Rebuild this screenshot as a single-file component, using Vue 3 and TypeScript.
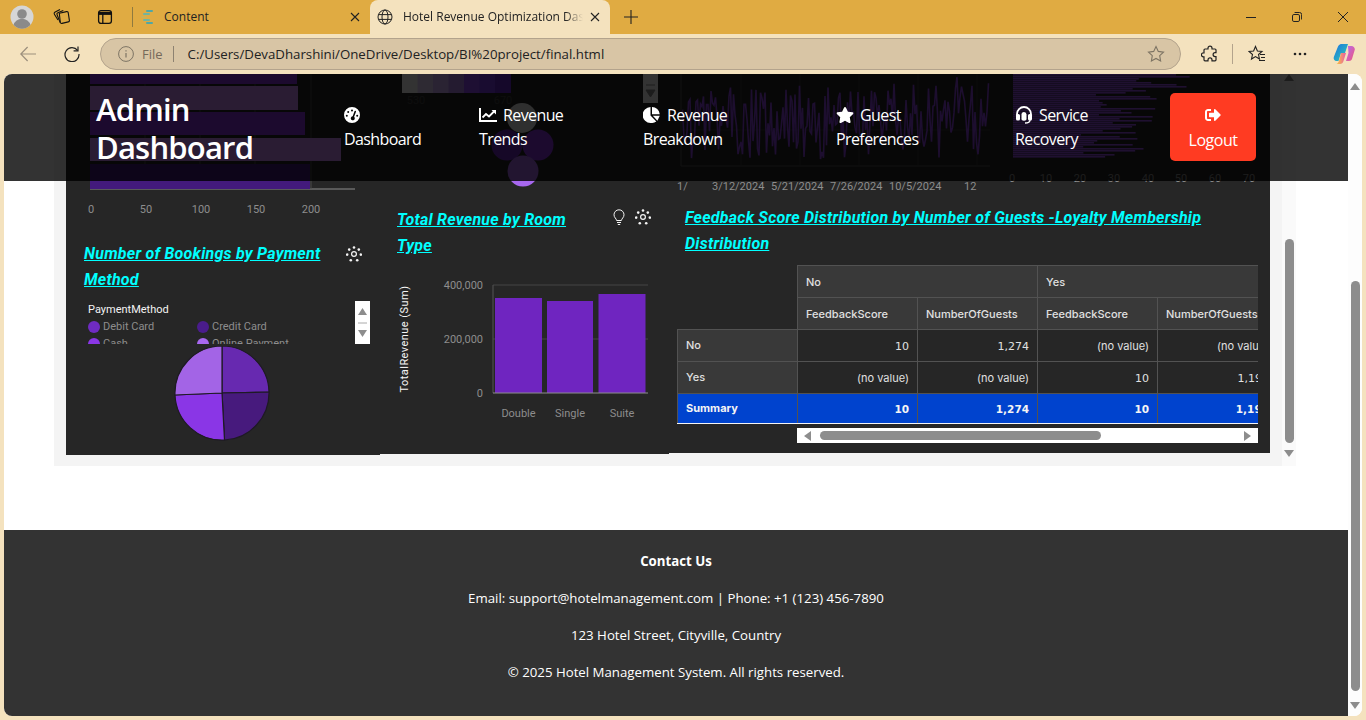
<script setup lang="ts">
const seed = (i: number) => {
  const x = Math.sin(i * 12.9898 + 4.1) * 43758.5453
  return x - Math.floor(x)
}
const linePts: string = Array.from({ length: 206 }, (_, i) => {
  const x = 681 + i * 1.5
  const y = 76 + seed(i) * 72 + seed(i + 300) * 16
  return `${x},${y.toFixed(1)}`
}).join(' ')
const hbars = Array.from({ length: 42 }, (_, i) => ({
  y: 74 + i * 2,
  w: 82 + seed(i + 40) * 70 + (i < 8 ? 30 : 0) - i * 0.5
}))
const rows = [
  { name: 'No', cells: ['10', '1,274', '(no value)', '(no value)'], cls: '' },
  { name: 'Yes', cells: ['(no value)', '(no value)', '10', '1,194'], cls: '' },
  { name: 'Summary', cells: ['10', '1,274', '10', '1,194'], cls: 'summary' }
]
const isNum = (c: string) => !c.startsWith('(')
const lineTicks = [
  { x: 677, t: '1/' }, { x: 712, t: '3/12/2024' }, { x: 771, t: '5/21/2024' },
  { x: 830, t: '7/26/2024' }, { x: 889, t: '10/5/2024' }, { x: 964, t: '12' }
]
const nav = [
  { id: 'dash', a: '', b: 'Dashboard' },
  { id: 'line', a: 'Revenue', b: 'Trends' },
  { id: 'pie', a: 'Revenue', b: 'Breakdown' },
  { id: 'star', a: 'Guest', b: 'Preferences' },
  { id: 'head', a: 'Service', b: 'Recovery' }
]
const heat = ['#ffffff', '#e6d2ff', '#d2afff', '#b487f0', '#964bff', '#7d3cf0', '#6928d2']
const dots = [[0, -6.5], [4.8, -4.4], [6.8, 0.6], [3.2, 6.2], [-3.2, 6.2], [-6.8, 0.6], [-4.8, -4.4]]
</script>

<template>
  <div class="window">
    <div class="tabstrip">
      <svg class="avatar" width="24" height="24" viewBox="0 0 24 24">
        <circle cx="12" cy="12" r="11.5" fill="#d6d6d6" />
        <circle cx="12" cy="9" r="4.8" fill="#8a8a8a" />
        <path d="M3.6 20a8.6 8 0 0 1 16.8 0a11.5 11.5 0 0 1-16.8 0z" fill="#8a8a8a" />
      </svg>
      <svg class="tool-a" width="18" height="18" viewBox="0 0 18 18" fill="none" stroke="#111" stroke-width="1.1">
        <path d="M7.300 5.200 14.500 3.600a1.400 1.400 0 0 1 1.700 1.100l1.200 7.600a1.400 1.400 0 0 1-1.100 1.600l-6.300 1.500a1.400 1.400 0 0 1-1.700-1z" />
        <path d="M8.200 14.600 5 6.500a1.400 1.400 0 0 1 .8-1.800l5.500-2.300" />
        <path d="M6 12 2.400 6.200a1.400 1.400 0 0 1 .4-1.900L8 1.600" />
      </svg>
      <svg class="tool-b" width="16" height="16" viewBox="0 0 16 16" fill="none" stroke="#111" stroke-width="1.3">
        <rect x="1.600" y="1.600" width="12.800" height="12.800" rx="2.400" />
        <path d="M1.600 4.400h12.800" stroke-width="3" />
        <path d="M5.800 5v9.400" />
      </svg>
      <span class="tab-sep"></span>
      <div class="tab">
        <svg width="16" height="16" viewBox="0 0 16 16" fill="none" stroke-width="2" stroke-linecap="round">
          <path d="M8 2h5" stroke="#4fa7a5" /><path d="M5 5h5" stroke="#6fb4a0" />
          <path d="M3 8h4" stroke="#c9b35a" /><path d="M5 11h5" stroke="#6fb4a0" /><path d="M8 14h5" stroke="#4fa7a5" />
        </svg>
        <span class="tab-title">Content</span>
        <svg class="tab-x" width="10" height="10" viewBox="0 0 10 10" stroke="#222" stroke-width="1.1"><path d="M1 1l8 8M9 1l-8 8" /></svg>
      </div>
      <div class="tab active">
        <svg width="16" height="16" viewBox="0 0 16 16" fill="none" stroke="#222" stroke-width="1">
          <circle cx="8" cy="8" r="7" /><ellipse cx="8" cy="8" rx="3" ry="7" /><path d="M1.400 5.600h13.200M1.400 10.400h13.200" />
        </svg>
        <span class="tab-title fade">Hotel Revenue Optimization Dashboard</span>
        <svg class="tab-x" width="10" height="10" viewBox="0 0 10 10" stroke="#222" stroke-width="1.1"><path d="M1 1l8 8M9 1l-8 8" /></svg>
      </div>
      <svg class="plus" width="14" height="14" viewBox="0 0 14 14" stroke="#222" stroke-width="1.1"><path d="M7 0v14M0 7h14" /></svg>
      <div class="winctl">
        <svg width="10" height="10" viewBox="0 0 10 10" stroke="#222" stroke-width="1"><path d="M0 5.500h10" /></svg>
        <svg width="10" height="10" viewBox="0 0 10 10" fill="none" stroke="#222" stroke-width="1"><rect x=".5" y="2.500" width="7" height="7" rx="1.400" /><path d="M2.600.5h5a2 2 0 0 1 2 2v5" /></svg>
        <svg width="10" height="10" viewBox="0 0 10 10" stroke="#222" stroke-width="1"><path d="M0 0l10 10M10 0 0 10" /></svg>
      </div>
    </div>

    <div class="toolbar">
      <svg class="back" width="16" height="16" viewBox="0 0 16 16" fill="none" stroke="#9b8f7c" stroke-width="1.200"><path d="M16 8H.8M7.600 1 .8 8l6.800 7" /></svg>
      <svg class="reload" width="16" height="16" viewBox="0 0 16 16" fill="none" stroke="#222" stroke-width="1.200"><path d="M13.600 4.400A7 7 0 1 0 15 8" /><path d="M14 .4v4.400H9.600" /></svg>
      <div class="address">
        <svg width="16" height="16" viewBox="0 0 16 16" fill="none" stroke="#7d7464" stroke-width="1"><circle cx="8" cy="8" r="7.400" /><path d="M8 7v4.600M8 4.200v1.400" stroke-width="1.200" /></svg>
        <span class="file">File</span>
        <span class="addr-sep"></span>
        <span class="url">C:/Users/DevaDharshini/OneDrive/Desktop/BI%20project/final.html</span>
        <svg class="addr-star" width="18" height="18" viewBox="0 0 18 18" fill="none" stroke="#7d7464" stroke-width="1.100"><path d="M9 1.600l2.300 4.800 5.200.7-3.800 3.600.9 5.200L9 13.400l-4.600 2.500.9-5.200L1.500 7.100l5.200-.7z" /></svg>
      </div>
      <svg class="ext" width="18" height="18" viewBox="0 0 18 18" fill="none" stroke="#222" stroke-width="1.200"><path d="M7 3.200a2 2 0 0 1 4 0V4h3a1 1 0 0 1 1 1v2.600h-.9a2 2 0 0 0 0 4h.9v3.200a1 1 0 0 1-1 1h-3v-.9a2 2 0 0 0-4 0v.9H4a1 1 0 0 1-1-1v-3h-.6a2 2 0 0 1 0-4H3V5a1 1 0 0 1 1-1h3z" /></svg>
      <span class="bar-sep"></span>
      <svg class="fav" width="18" height="18" viewBox="0 0 18 18" fill="none" stroke="#222" stroke-width="1.100"><path d="M7.500 1.500 9.400 6 14 6.500l-3.500 3 1 4.500-4-2.400-4 2.400 1-4.500L1 6.500 5.600 6z" /><path d="M12 9.500h5M13 12.500h4M11 15.500h6" /></svg>
      <svg class="more" width="14" height="4" viewBox="0 0 14 4" fill="#222"><circle cx="2" cy="2" r="1.300" /><circle cx="7" cy="2" r="1.300" /><circle cx="12" cy="2" r="1.300" /></svg>
      <svg class="copilot" width="22" height="22" viewBox="0 0 22 22">
        <defs>
          <linearGradient id="cpA" x1="0" y1="0" x2="1" y2="1"><stop offset="0" stop-color="#1b6fe2" /><stop offset="1" stop-color="#2fd2b0" /></linearGradient>
          <linearGradient id="cpB" x1="0" y1="0" x2="1" y2="1"><stop offset="0" stop-color="#b56bf0" /><stop offset="1" stop-color="#f0557a" /></linearGradient>
          <linearGradient id="cpC" x1="0" y1="0" x2="1" y2="0"><stop offset="0" stop-color="#f6c83c" /><stop offset="1" stop-color="#ea5aa8" /></linearGradient>
        </defs>
        <path d="M5 3.500C6 1.500 7.500 1 9 1h6l-3 9H8l-2.500 8H3.500C1.500 18 .2 16 .8 14z" fill="url(#cpA)" />
        <path d="M15 3h3.500c2 0 3.800 2 3.200 4l-2.700 9c-.4 1.300-1.500 2-3 2h-3l2.500-8z" fill="url(#cpB)" />
        <path d="M8 10h5l-2.500 8c-.5 1.700-1.700 3-3.500 3H3.500c2.500-1 3-5 4.500-11z" fill="url(#cpC)" />
      </svg>
    </div>

    <div class="page">
      <div class="doc">
        <header class="topbar">
          <h1 class="logo">Admin Dashboard</h1>
          <a v-for="n in nav" :key="n.id" class="navitem">
            <span class="navline">
              <svg v-if="n.id === 'dash'" class="ic" width="16" height="16" viewBox="0 0 16 16" fill="#fff">
                <path fill-rule="evenodd" d="M8 0a8 8 0 1 1 0 16A8 8 0 0 1 8 0zM8 2.400a1 1 0 1 0 0 2 1 1 0 0 0 0-2zM4.200 4a1 1 0 1 0 0 2 1 1 0 0 0 0-2zM2.800 7.800a1 1 0 1 0 0 2 1 1 0 0 0 0-2zM13.200 7.800a1 1 0 1 0 0 2 1 1 0 0 0 0-2zM11.500 3.700a.8.8 0 0 0-1 .5L8.700 9.300a2 2 0 1 0 1.400.5l1.900-5.100a.8.8 0 0 0-.5-1z" />
              </svg>
              <svg v-else-if="n.id === 'line'" class="ic" width="18" height="16" viewBox="0 0 18 16" fill="none" stroke="#fff">
                <path d="M1 1v13h17" stroke-width="2" />
                <path d="M3.500 10.500 7 7l3 2.500L15.500 4" stroke-width="1.800" />
                <path d="M12.500 3h4.500v4.500z" fill="#fff" stroke="none" />
              </svg>
              <svg v-else-if="n.id === 'pie'" class="ic" width="18" height="16" viewBox="0 0 18 16" fill="#fff">
                <path d="M7.500 0v8.600l5.800 5.800A7.900 7.900 0 0 1 7.800 16 7.900 7.900 0 0 1 7.500 0z" />
                <path d="M9 0a8 8 0 0 1 7.800 7.200H9z" /><path d="M9.800 8.800h7l-2.400 4.900z" />
              </svg>
              <svg v-else-if="n.id === 'star'" class="ic" width="18" height="16" viewBox="0 0 576 512" fill="#fff">
                <path d="M259.300 17.800L194 150.200 47.900 171.500c-26.200 3.800-36.700 36.100-17.700 54.600l105.700 103-25 145.500c-4.500 26.300 23.200 46 46.400 33.700L288 439.600l130.700 68.700c23.200 12.200 50.900-7.400 46.400-33.700l-25-145.500 105.700-103c19-18.500 8.500-50.800-17.700-54.600L382 150.200 316.700 17.800c-11.700-23.600-45.600-23.900-57.400 0z" />
              </svg>
              <svg v-else class="ic" width="18" height="18" viewBox="0 0 18 18" fill="none" stroke="#fff">
                <path d="M2 10V8a7 7 0 0 1 14 0v2" stroke-width="1.800" />
                <rect x="1" y="8" width="4" height="6.500" rx="1.600" fill="#fff" stroke="none" />
                <rect x="13" y="8" width="4" height="6.500" rx="1.600" fill="#fff" stroke="none" />
                <path d="M6.500 8.500v5a3 3 0 0 0 5 0v-5a2.500 2.500 0 0 0-5 0z" fill="#fff" stroke="none" />
                <path d="M15 14c0 2-2 3-5 3" stroke-width="1.400" />
              </svg>
              <span v-if="n.a">{{ n.a }}</span>
            </span>
            <span>{{ n.b }}</span>
          </a>
          <button class="logout" type="button">
            <svg width="16" height="16" viewBox="0 0 512 512" fill="#fff">
              <path d="M497 273L329 441c-15 15-41 4.500-41-17v-96H152c-13.300 0-24-10.700-24-24v-96c0-13.300 10.700-24 24-24h136V88c0-21.400 25.900-32 41-17l168 168c9.300 9.400 9.300 24.600 0 34zM192 436v-40c0-6.600-5.400-12-12-12H96c-17.700 0-32-14.300-32-32V160c0-17.700 14.300-32 32-32h84c6.600 0 12-5.400 12-12V76c0-6.600-5.400-12-12-12H96c-53 0-96 43-96 96v192c0 53 43 96 96 96h84c6.600 0 12-5.400 12-12z" />
            </svg>
            <span>Logout</span>
          </button>
        </header>

        <section class="content">
          <div class="panel">
            <div class="board">
              <div class="col col1">
                <svg class="top1" width="314" height="167" viewBox="66 74 314 167">
                  <path d="M90 189h265" stroke="#8d8d8d" />
                  <path d="M145 74v115M200 74v115M255 74v115M311 74v115" stroke="#4a4a4a" />
                  <rect x="90" y="74" width="207" height="10" fill="#8a36e6" />
                  <rect x="90" y="86" width="208" height="24" fill="#d08cff" />
                  <rect x="90" y="112" width="215" height="23" fill="#8a36e6" />
                  <rect x="90" y="138" width="251" height="23" fill="#d08cff" />
                  <rect x="90" y="164" width="220" height="25" fill="#431a7c" />
                  <g class="tick" text-anchor="middle">
                    <text x="91" y="213">0</text><text x="146" y="213">50</text><text x="201" y="213">100</text>
                    <text x="256" y="213">150</text><text x="311" y="213">200</text>
                  </g>
                </svg>
                <div class="title-row">
                  <h2 class="chart-title"><u>Number of Bookings by Payment Method</u></h2>
                  <svg class="gear" width="16" height="16" viewBox="-8 -8 16 16" fill="#f4f4f4">
                    <circle r="2.400" fill="none" stroke="#f4f4f4" stroke-width="1.200" />
                    <circle v-for="(d, i) in dots" :key="i" :cx="d[0]" :cy="d[1]" r="1.300" />
                  </svg>
                </div>
                <div class="legend-wrap">
                  <div class="legend">
                    <div class="legend-head">PaymentMethod</div>
                    <div class="legend-grid">
                      <span class="li"><i class="dot d1"></i>Debit Card</span>
                      <span class="li"><i class="dot d2"></i>Credit Card</span>
                      <span class="li"><i class="dot d3"></i>Cash</span>
                      <span class="li"><i class="dot d4"></i>Online Payment</span>
                    </div>
                  </div>
                  <div class="pager">
                    <svg width="15" height="43" viewBox="0 0 15 43" fill="#8d8d8d">
                      <path d="M7.500 7 12 14H3z" /><path d="M3 22h9" stroke="#aaa" /><path d="M3 29h9l-4.500 7z" />
                    </svg>
                  </div>
                </div>
                <svg class="pie" width="314" height="100" viewBox="66 346 314 100">
                  <g stroke="#1e1a24" stroke-width="1.200">
                    <path d="M222 393V346A47 47 0 0 1 269 392z" fill="#6729b0" />
                    <path d="M222 393L269 392A47 47 0 0 1 224.500 440z" fill="#471a7d" />
                    <path d="M222 393L224.500 440A47 47 0 0 1 175 395z" fill="#8a36e6" />
                    <path d="M222 393L175 395A47 47 0 0 1 222 346z" fill="#a364e6" />
                  </g>
                </svg>
              </div>

              <div class="col col2">
                <svg class="top2" width="289" height="133" viewBox="380 74 289 133">
                  <rect v-for="(c, i) in heat" :key="i" :x="402 + i * 15.500" y="74" width="16" height="19" :fill="c" />
                  <g class="tick faint" text-anchor="middle"><text x="416" y="104">530</text><text x="503" y="104">670</text></g>
                  <rect x="643" y="74" width="15" height="29" fill="#fff" />
                  <path d="M646 85h9M646 90h9l-4.500 7z" fill="#8d8d8d" stroke="#8d8d8d" />
                  <circle cx="522" cy="118" r="15" fill="#e8e8e8" />
                  <circle cx="538" cy="145" r="15.500" fill="#8a36e6" />
                  <circle cx="507" cy="145" r="15.500" fill="#6f2bc2" />
                  <circle cx="523" cy="171" r="15.500" fill="#a868f0" />
                </svg>
                <div class="title-row tight">
                  <h2 class="chart-title"><u>Total Revenue by Room Type</u></h2>
                  <div class="title-icons">
                    <svg width="14" height="16" viewBox="0 0 14 16" fill="none" stroke="#f4f4f4"><path d="M4.600 11.500C4.400 9.500 2 8.600 2 5.800a5 5 0 0 1 10 0c0 2.800-2.400 3.700-2.600 5.700z" /><path d="M5 13.500h4M5.800 15.500h2.400" /></svg>
                    <svg class="gear" width="16" height="16" viewBox="-8 -8 16 16" fill="#f4f4f4">
                      <circle r="2.400" fill="none" stroke="#f4f4f4" stroke-width="1.200" />
                      <circle v-for="(d, i) in dots" :key="i" :cx="d[0]" :cy="d[1]" r="1.300" />
                    </svg>
                  </div>
                </div>
                <svg class="bars" width="289" height="180" viewBox="380 259 289 180">
                  <path d="M493 285H648M493 339H648" stroke="#444" />
                  <path d="M493 285V393" stroke="#555" />
                  <rect x="495" y="298" width="47" height="95" fill="#6f25c0" />
                  <rect x="547" y="301" width="46" height="92" fill="#6f25c0" />
                  <rect x="598.500" y="294" width="47" height="99" fill="#6f25c0" />
                  <path d="M493 393H648" stroke="#8d8d8d" />
                  <g class="tick" text-anchor="end">
                    <text x="483" y="289">400,000</text><text x="483" y="343">200,000</text><text x="483" y="397">0</text>
                  </g>
                  <g class="tick" text-anchor="middle">
                    <text x="518.500" y="417">Double</text><text x="570" y="417">Single</text><text x="622" y="417">Suite</text>
                  </g>
                  <text class="axis-y" transform="translate(408 339) rotate(-90)" text-anchor="middle">TotalRevenue (Sum)</text>
                </svg>
              </div>

              <div class="col col3">
                <svg class="top3" width="601" height="131" viewBox="669 74 601 131">
                  <path d="M681 166H990M681 74V166" stroke="#555" />
                  <path d="M741 74V166M800 74V166M859 74V166M918 74V166M977 74V166M681 130H990" stroke="#3d3d3d" />
                  <polyline :points="linePts" fill="none" stroke="#8f45e8" stroke-width="1.600" />
                  <g class="tick">
                    <text v-for="t in lineTicks" :key="t.x" :x="t.x" y="190">{{ t.t }}</text>
                  </g>
                  <rect v-for="b in hbars" :key="b.y" x="1013" :y="b.y" :width="b.w" height="1.600" fill="#9a50f0" />
                  <g class="tick faint2" text-anchor="middle">
                    <text x="1012" y="182">0</text><text x="1046" y="182">10</text><text x="1080" y="182">20</text><text x="1114" y="182">30</text>
                    <text x="1148" y="182">40</text><text x="1181" y="182">50</text><text x="1215" y="182">60</text><text x="1249" y="182">70</text>
                  </g>
                </svg>
                <h2 class="chart-title wide"><u>Feedback Score Distribution by Number of Guests -Loyalty Membership Distribution</u></h2>
                <div class="tbl-clip">
                  <table class="pivot">
                    <colgroup><col class="c0" /><col class="c1" /><col class="c1" /><col class="c1" /><col class="c1" /></colgroup>
                    <thead>
                      <tr><th class="blank noline"></th><th class="hd" colspan="2">No</th><th class="hd" colspan="2">Yes</th></tr>
                      <tr>
                        <th class="blank"></th><th class="hd">FeedbackScore</th><th class="hd">NumberOfGuests</th>
                        <th class="hd">FeedbackScore</th><th class="hd">NumberOfGuests</th>
                      </tr>
                    </thead>
                    <tbody>
                      <tr v-for="r in rows" :key="r.name" :class="r.cls">
                        <th class="hd rowh">{{ r.name }}</th>
                        <td v-for="(c, i) in r.cells" :key="i" :class="{ num: isNum(c) }">{{ c }}</td>
                      </tr>
                    </tbody>
                  </table>
                </div>
                <div class="hscroll">
                  <svg width="8" height="10" viewBox="0 0 8 10" fill="#8d8d8d"><path d="M7 0v10L0 5z" /></svg>
                  <span class="hthumb"></span>
                  <svg class="hnext" width="8" height="10" viewBox="0 0 8 10" fill="#8d8d8d"><path d="M1 0v10l7-5z" /></svg>
                </div>
              </div>
            </div>
          </div>
          <div class="vscroll inner">
            <svg width="10" height="7" viewBox="0 0 10 7" fill="#8d8d8d"><path d="M5 0l5 7H0z" /></svg>
            <span class="vthumb inner-thumb"></span>
            <svg class="inner-down" width="10" height="7" viewBox="0 0 10 7" fill="#8d8d8d"><path d="M0 0h10L5 7z" /></svg>
          </div>
        </section>

        <footer class="foot">
          <p><strong>Contact Us</strong></p>
          <p>Email: support@hotelmanagement.com | Phone: +1 (123) 456-7890</p>
          <p>123 Hotel Street, Cityville, Country</p>
          <p>© 2025 Hotel Management System. All rights reserved.</p>
        </footer>
      </div>
      <div class="vscroll outer">
        <svg class="outer-up" width="10" height="7" viewBox="0 0 10 7" fill="#8d8d8d"><path d="M5 0l5 7H0z" /></svg>
        <span class="vthumb outer-thumb"></span>
        <svg class="outer-down" width="10" height="7" viewBox="0 0 10 7" fill="#8d8d8d"><path d="M0 0h10L5 7z" /></svg>
      </div>
    </div>
  </div>
</template>

<style scoped>
.window {
  width: 1366px;
  height: 720px;
  display: flex;
  flex-direction: column;
  background: #f4e2be;
  font-family: "Open Sans", "Noto Sans", sans-serif;
  overflow: hidden;
}
.tabstrip {
  height: 34px;
  background: #e0ab42;
  display: flex;
  align-items: center;
  flex: none;
}
.avatar { margin-left: 10px; }
.tool-a { margin-left: 18px; }
.tool-b { margin-left: 27px; }
.tab-sep { width: 1px; height: 20px; background: #8f7a3f; margin-left: 19px; }
.tab {
  display: flex;
  align-items: center;
  width: 237px;
  height: 34px;
  padding-left: 6px;
  box-sizing: border-box;
  font-size: 12px;
  color: #222;
  line-height: 32px;
}
.tab-title { margin-left: 9px; white-space: nowrap; overflow: hidden; padding-bottom: 1px; }
.tab-x { margin-left: auto; margin-right: 10px; }
.tab.active {
  width: 240px;
  background: #f4e2be;
  border-radius: 8px 8px 0 0;
  padding-left: 7px;
}
.tab-title.fade { width: 180px; margin-left: 10px; -webkit-mask-image: linear-gradient(90deg, #000 90%, transparent); mask-image: linear-gradient(90deg, #000 90%, transparent); }
.plus { margin-left: 14px; }
.winctl { margin-left: auto; display: flex; gap: 36px; margin-right: 18px; }

.toolbar {
  height: 40px;
  display: flex;
  align-items: center;
  flex: none;
}
.back { margin-left: 20px; }
.reload { margin-left: 28px; }
.address {
  margin-left: 20px;
  width: 1081px;
  height: 32px;
  box-sizing: border-box;
  border: 1px solid #b3a38c;
  border-radius: 16px;
  background: #d8c5a5;
  display: flex;
  align-items: center;
  padding-left: 17px;
}
.file { margin-left: 8px; font-size: 13px; color: #75695a; }
.addr-sep { width: 1px; height: 16px; background: #8d8271; margin-left: 10px; }
.url { margin-left: 14px; font-size: 13.25px; color: #222; white-space: nowrap; }
.addr-star { margin-left: auto; margin-right: 15px; }
.ext { margin-left: 20px; }
.bar-sep { width: 1px; height: 20px; background: #b3a38c; margin-left: 13px; }
.fav { margin-left: 15px; }
.more { margin-left: 27px; }
.copilot { margin-left: 26px; }

.page {
  flex: 1;
  margin: 0 4px 4px;
  display: flex;
  background: #fff;
  border-radius: 8px;
  overflow: hidden;
  min-height: 0;
}
.doc {
  position: relative;
  width: 1344px;
  display: flex;
  flex-direction: column;
  flex: none;
}
.topbar {
  position: absolute;
  left: 0;
  right: 0;
  top: 0;
  height: 107px;
  box-sizing: border-box;
  padding: 0 0 2px 92px;
  background: rgba(0, 0, 0, 0.8);
  color: #fff;
  display: grid;
  grid-template-columns: 248px 135px 164px 193px 179px 155px 86px;
  align-items: center;
  z-index: 5;
}
.logo {
  margin: 0 0 -2px;
  width: 190px;
  font-size: 31px;
  line-height: 38px;
  font-weight: 600;
  letter-spacing: -0.8px;
}
.navitem {
  display: flex;
  flex-direction: column;
  font-size: 16px;
  line-height: 24px;
  letter-spacing: -0.6px;
}
.navline { display: flex; align-items: center; gap: 6px; height: 24px; }
.logout {
  height: 68px;
  width: 86px;
  border: 0;
  border-radius: 5px;
  background: #ff3b22;
  color: #fff;
  font: inherit;
  font-size: 16px;
  letter-spacing: -0.5px;
  line-height: 24px;
  padding: 14px 0 0;
  display: flex;
  flex-direction: column;
  align-items: center;
  justify-content: flex-start;
  gap: 5px;
}

.content {
  height: 456px;
  flex: none;
  display: flex;
  align-items: flex-start;
  padding-left: 50px;
  background: #fff;
}
.panel {
  width: 1228px;
  height: 392px;
  background: #f4f4f4;
  padding: 0 12px;
  box-sizing: border-box;
}
.board { display: flex; align-items: flex-start; }
.col { background: #262626; flex: none; }
.col1 { width: 314px; height: 381px; }
.col2 { width: 289px; height: 380px; }
.col3 { width: 601px; height: 379px; }
.col svg { display: block; }
.tick { font: 11px Roboto, sans-serif; fill: #8d8d8d; }
.faint { fill: #444; }
.axis-y { font: 11px Roboto, sans-serif; fill: #f4f4f4; letter-spacing: .45px; }
.title-row {
  display: flex;
  justify-content: space-between;
  padding: 0 18px;
}
.title-row.tight { padding: 0 18px 0 17px; }
.chart-title {
  margin: 0;
  font: italic 700 16px/26px Roboto, sans-serif;
  letter-spacing: 0.24px;
  color: #00ffff;
  width: 250px;
}
.chart-title.wide { width: 560px; margin-left: 16px; }
.col2 .chart-title { width: 195px; }
.title-icons { display: flex; gap: 9px; margin-left: auto; height: 26px; padding-top: 2px; box-sizing: border-box; }
.col1 .gear { margin-top: 5px; }
.legend-wrap {
  display: flex;
  margin: 8px 0 0 22px;
  height: 45px;
}
.legend {
  width: 267px;
  height: 43px;
  overflow: hidden;
  font: 11px/14px Roboto, sans-serif;
  color: #8d8d8d;
}
.legend-head { color: #f4f4f4; height: 14px; margin-top: 2px; }
.legend-grid { display: grid; grid-template-columns: 109px 109px; margin-top: 3px; row-gap: 3px; }
.li { display: flex; align-items: center; gap: 3px; }
.dot { width: 12px; height: 12px; border-radius: 50%; }
.d1 { background: #6f2bc2; }
.d2 { background: #4a1c8c; }
.d3 { background: #8a36e6; }
.d4 { background: #a868f0; }
.pager { width: 15px; height: 43px; background: #fff; }
.tbl-clip {
  width: 581px;
  margin: 8px 0 0 8px;
  overflow: hidden;
}
.pivot {
  border-collapse: collapse;
  table-layout: fixed;
  width: 601px;
  font: 11px Inter, Roboto, sans-serif;
  color: #e0e0e0;
}
.c0 { width: 120px; }
.c1 { width: 120px; }
.pivot th, .pivot td {
  height: 32px;
  box-sizing: border-box;
  padding: 0 8px;
  border: 1px solid #525252;
  white-space: nowrap;
}
.pivot th { text-align: left; font-weight: 500; }
.pivot td { text-align: right; padding-top: 1px; }
.pivot .rowh { padding-bottom: 2px; }
.pivot .num { font-family: "DejaVu Sans", sans-serif; }
.pivot .hd { background: #393939; }
.pivot .blank { background: #262626; border: 0; border-bottom: 1px solid #525252; }
.pivot .blank.noline { border-bottom: 0; }
.summary th, .summary td {
  background: #0043ce !important;
  color: #f4f4f4;
  font-weight: 700 !important;
  height: 30px !important;
  border-top: 1px solid #f4f4f4 !important;
  border-bottom: 1px solid #f4f4f4 !important;
}
.summary .num { font-size: 10.500px; }
.hscroll {
  margin: 4px 0 0 128px;
  width: 461px;
  height: 15px;
  background: #fff;
  display: flex;
  align-items: center;
  padding: 0 7px;
  box-sizing: border-box;
}
.hthumb { width: 281px; height: 9px; border-radius: 5px; background: #8d8d8d; margin-left: 8px; }
.hnext { margin-left: auto; }

.vscroll {
  width: 14px;
  background: #fdfdfd;
  display: flex;
  flex-direction: column;
  align-items: center;
  flex: none;
}
.vthumb { width: 9px; border-radius: 5px; background: #8d8d8d; display: block; }
.inner { height: 392px; background: #fafafa; }
.inner-thumb { margin-top: 158px; height: 204px; }
.inner-down { margin-top: 7px; }
.outer-up { margin-top: 9px; }
.outer-thumb { margin-top: 191px; height: 410px; }
.outer-down { margin-top: 11px; }

.foot {
  height: 186px;
  box-sizing: border-box;
  background: #333;
  color: #fff;
  text-align: center;
  font-size: 13.25px;
  padding-top: 20px;
}
.foot p { margin: 0 0 14px; line-height: 23px; }
</style>
